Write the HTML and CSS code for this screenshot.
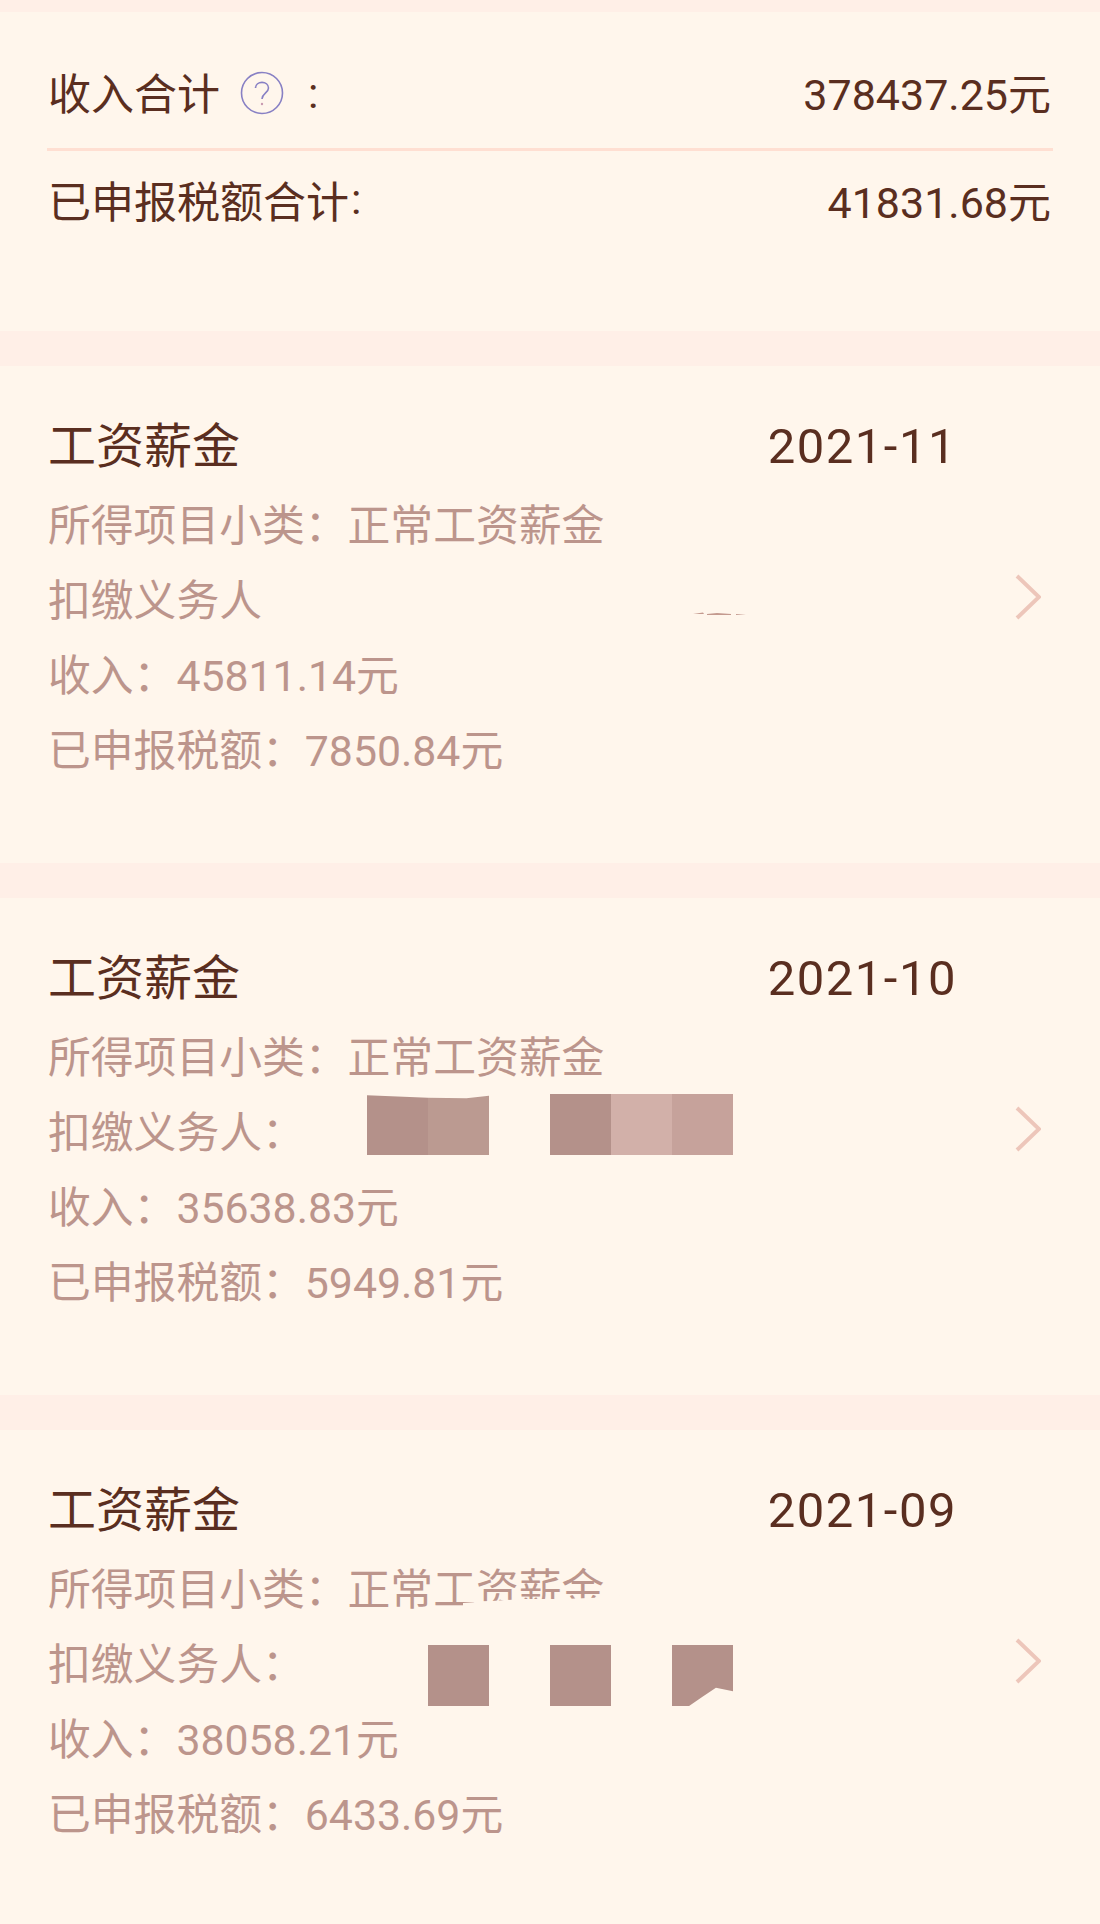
FILE: index.html
```html
<!DOCTYPE html>
<html lang="zh-CN">
<head>
  <meta charset="UTF-8">
  <title>收入纳税明细</title>
  <link rel="stylesheet" href="styles.css">
</head>
<body>
  <div class="summary">
    <div class="sum-row sum-first">
      <span class="sum-label">收入合计
        <svg class="help" viewBox="0 0 44 44" width="44" height="44">
          <circle cx="22" cy="22" r="20.5" fill="none" stroke="#8880c4" stroke-width="1.6"/>
          <path d="M15.5 17 C15.5 9.5 28.5 9.5 28.5 17 C28.5 22 22 22.5 22 28" fill="none" stroke="#8880c4" stroke-width="1.6"/>
          <circle cx="22" cy="33" r="1.2" fill="#c99ab0"/>
        </svg>
        <span class="sum-colon">:</span>
      </span>
      <span class="num">378437.25元</span>
    </div>
    <div class="sum-row">
      <span class="sum-label">已申报税额合计<span class="sum-colon-b">:</span></span>
      <span class="num">41831.68元</span>
    </div>
  </div>

  <div class="card">
    <div class="card-body">
      <div class="card-head"><span>工资薪金</span><span class="date">2021-11</span></div>
      <div class="line">所得项目小类：正常工资薪金</div>
      <div class="line">扣缴义务人
        <svg class="scrap" viewBox="0 0 54 5" width="54" height="5">
          <path d="M0 3 L10 1.5 L11 3 Z M14 3 L24 2 L38 3 L38 4 L14 4 Z M43 3 L53 3.5 L43 4 Z" fill="#c49a8f"/>
        </svg>
      </div>
      <div class="line">收入：45811.14元</div>
      <div class="line">已申报税额：7850.84元</div>
    </div>
    <svg class="chev" viewBox="0 0 26 46" width="26" height="46"><path d="M2 2 L24 23 L2 44" fill="none" stroke="#edc6ba" stroke-width="4"/></svg>
  </div>

  <div class="card">
    <div class="card-body">
      <div class="card-head"><span>工资薪金</span><span class="date">2021-10</span></div>
      <div class="line">所得项目小类：正常工资薪金</div>
      <div class="line">扣缴义务人：
        <div class="mask mask-b">
          <i class="m1 dip-l"></i><i class="m2 dip-r"></i><i class="off"></i><i class="m1"></i><i class="m3"></i><i class="m4"></i>
        </div>
      </div>
      <div class="line">收入：35638.83元</div>
      <div class="line">已申报税额：5949.81元</div>
    </div>
    <svg class="chev" viewBox="0 0 26 46" width="26" height="46"><path d="M2 2 L24 23 L2 44" fill="none" stroke="#edc6ba" stroke-width="4"/></svg>
  </div>

  <div class="card last">
    <div class="card-body">
      <div class="card-head"><span>工资薪金</span><span class="date">2021-09</span></div>
      <div class="line">所得项目小类：正常工资薪金<i class="erase"></i></div>
      <div class="line">扣缴义务人：
        <div class="mask mask-c">
          <i class="m1"></i><i class="off"></i><i class="m1"></i><i class="off"></i><i class="m1 torn"></i>
        </div>
      </div>
      <div class="line">收入：38058.21元</div>
      <div class="line">已申报税额：6433.69元</div>
    </div>
    <svg class="chev" viewBox="0 0 26 46" width="26" height="46"><path d="M2 2 L24 23 L2 44" fill="none" stroke="#edc6ba" stroke-width="4"/></svg>
  </div>
</body>
</html>
```

FILE: styles.css
```css
body {
  margin: 0;
  padding-top: 12px;
  height: 1912px;
  overflow: hidden;
  background: #ffefe7;
  color: #5a2e20;
  font-family: Roboto, "Noto Sans CJK SC", sans-serif;
}
.summary {
  height: 319px;
  margin-bottom: 35px;
  padding: 0 47px;
  background: #fff6ec;
  box-sizing: border-box;
  font-size: 43px;
}
.sum-row {
  display: flex;
  justify-content: space-between;
  align-items: center;
  height: 96px;
}
.sum-row .num {
  margin-right: 2px;
}
.sum-first {
  height: 139px;
  padding-top: 22px;
  box-sizing: border-box;
  border-bottom: 3px solid #ffdfd2;
}
.sum-label {
  display: flex;
  align-items: center;
  padding-left: 1px;
}
.help {
  margin: 4px 0 0 20px;
}
.sum-colon {
  margin: 4px 0 0 24px;
}
.sum-colon-b {
  margin-left: 2px;
}
.card {
  display: flex;
  align-items: flex-start;
  justify-content: space-between;
  height: 497px;
  margin-bottom: 35px;
  padding: 44px 59px 0 48px;
  background: #fff6ec;
  box-sizing: border-box;
}
.card.last {
  margin-bottom: 0;
}
.card-body {
  width: 909px;
}
.card-head {
  display: flex;
  justify-content: space-between;
  margin-bottom: 5px;
  font-size: 48px;
  line-height: 74px;
}
.date {
  font-size: 49px;
  letter-spacing: 1.5px;
}
.line {
  position: relative;
  height: 75px;
  line-height: 75px;
  font-size: 42.8px;
  color: #bc958c;
}
.chev {
  margin-top: 164px;
}
.mask {
  position: absolute;
  display: flex;
}
.mask i {
  display: block;
  width: 61px;
  height: 61px;
}
.mask-b {
  left: 319px;
  top: -2px;
}
.mask-c {
  left: 380px;
  top: 17px;
}
.mask .off { background: #fff6ec; }
.m1 { background: #b4918a; }
.m2 { background: #bb9a91; }
.m3 { background: #d2b0a9; }
.m4 { background: #c6a29b; }
.dip-l {
  clip-path: polygon(0 2%, 100% 6%, 100% 100%, 0 100%);
}
.dip-r {
  clip-path: polygon(0 6%, 63% 7%, 100% 3%, 100% 100%, 0 100%);
}
.torn {
  clip-path: polygon(0 0, 100% 0, 100% 76%, 72% 70%, 50% 85%, 28% 100%, 0 100%);
}
.scrap {
  position: absolute;
  left: 645px;
  top: 47px;
}
.erase {
  position: absolute;
  left: 415px;
  top: 30px;
  width: 200px;
  height: 40px;
  background: #fff6ec;
  clip-path: polygon(0 50%, 30% 40%, 50% 40%, 76% 35%, 92% 12%, 100% 8%, 100% 100%, 0 100%);
}
```
